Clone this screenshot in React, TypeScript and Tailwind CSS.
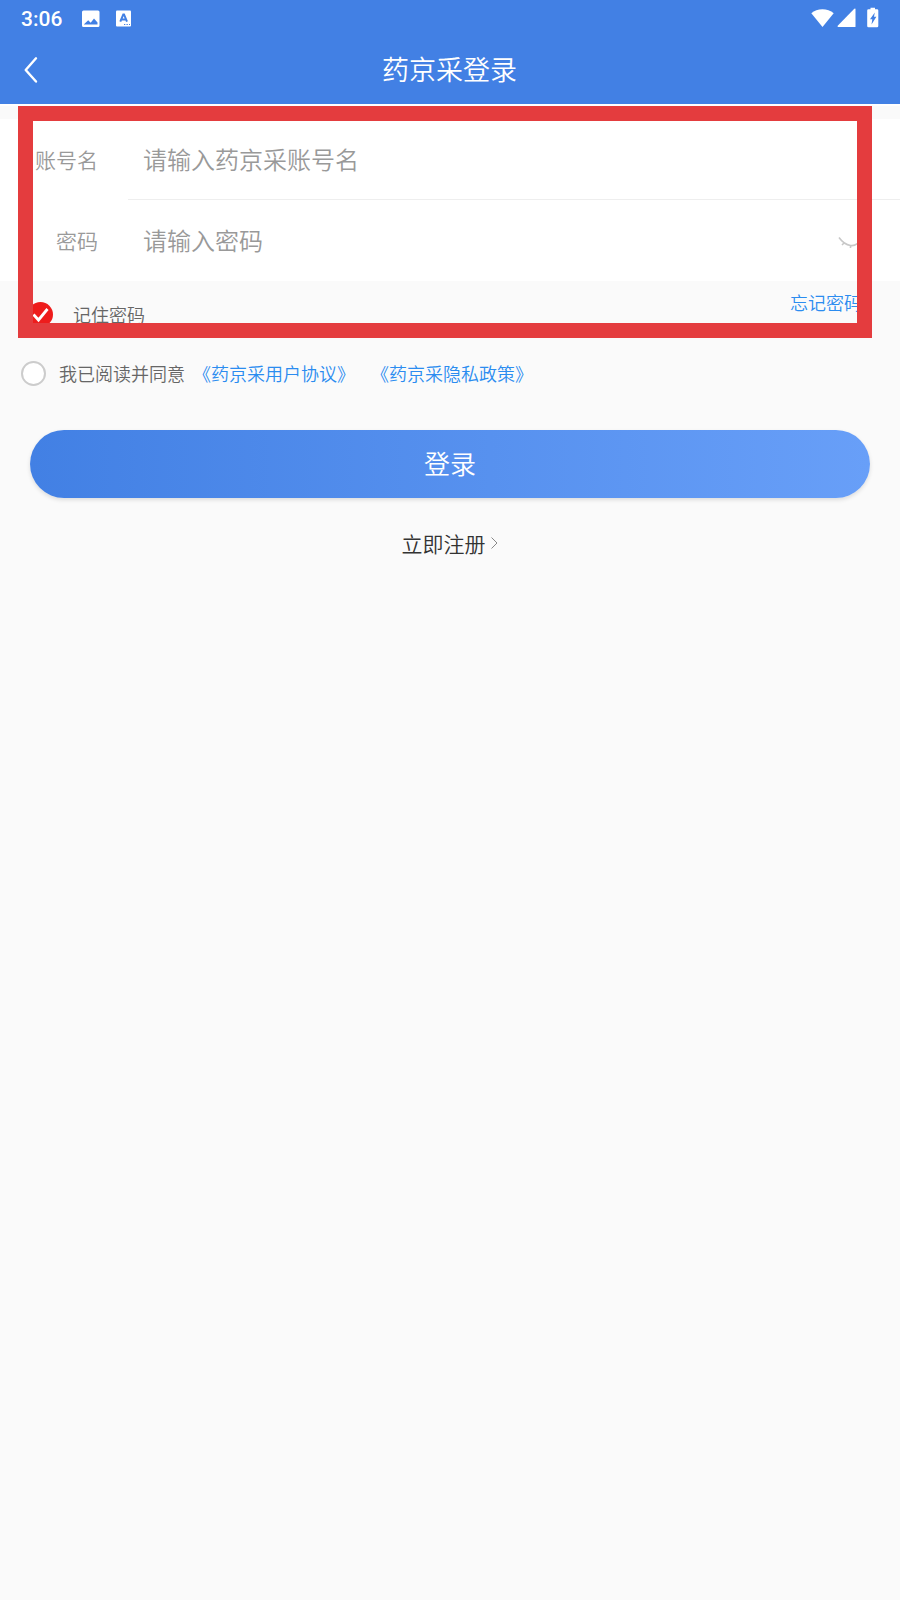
import * as React from "react";

const StatusBar = () => (
  <div className="flex h-9 items-center pl-[21px] pr-[21px] text-white">
    <span className="w-[61px] pt-px font-[Roboto] text-[21px] leading-9 font-medium">
      3:06
    </span>
    <svg className="mt-px h-[18px] w-[18px]" viewBox="0 0 18 18">
      <path
        fill="currentColor"
        fillRule="evenodd"
        d="M1.500 0.500h14.500q1.500 0 1.500 1.500v13.500q0 1.500-1.500 1.500H1.500q-1.500 0-1.500-1.500V2q0-1.500 1.500-1.500zM2 14.500h13.500v-2l-3.500-4-3.300 4.200-2.500-2.500-4.200 4z"
      />
    </svg>
    <svg className="mt-px ml-4 h-[17px] w-[16px]" viewBox="0 0 16 17">
      <path
        fill="currentColor"
        d="M1 0.500h13q1 0 1 1v14q0 1-1 1h-13q-1 0-1-1v-14q0-1 1-1z"
      />
      <path
        fill="none"
        stroke="#4280e4"
        strokeWidth="2"
        d="M4.300 11.700 7.300 4.400h.7L11 11.700M5.500 9.500h4.400"
      />
      <path
        stroke="#4280e4"
        strokeWidth="1.200"
        strokeDasharray="1.300 1.200"
        d="M8 14.500h6"
      />
    </svg>
    <div className="grow" />
    <svg className="h-[20px] w-[23px]" viewBox="0 0 23 20">
      <path fill="currentColor" d="M0.300 5.200C6-.2 16.800-.2 22.700 5.200L11.500 19z" />
    </svg>
    <svg className="ml-[3px] h-[20px] w-[19px]" viewBox="0 0 19 20">
      <path
        fill="currentColor"
        d="M18.500 1v17.500q0 .5-.5.500H1.200q-1.200-.3-.5-1.200L17.300.7q1.200-.7 1.200.3z"
      />
    </svg>
    <svg className="-mt-px ml-[11px] h-[21px] w-[12px]" viewBox="0 0 12 21">
      <path
        fill="currentColor"
        d="M3.500 0.700h4.500v1.600h2q1.300 0 1.300 1.300V19q0 1.300-1.300 1.300H1.500Q.2 20.300.2 19V3.600q0-1.300 1.300-1.300h2z"
      />
      <path fill="#4280e4" d="M7.800 5.500 7 9.700h2.400L4.500 17.500l.8-5.300H3z" />
    </svg>
  </div>
);

const Header = () => (
  <header className="h-[104px] bg-[#4280e4]">
    <StatusBar />
    <div className="flex h-[68px] items-center pl-6">
      <svg
        className="h-[28px] w-[14px]"
        viewBox="0 0 14 28"
        fill="none"
        stroke="white"
        strokeWidth="2.400"
        strokeLinecap="round"
        strokeLinejoin="round"
      >
        <path d="M12 2.300 1.700 14 12 25.500" />
      </svg>
      <h1 className="grow pr-[39px] pb-0.5 text-center text-[27px] leading-[66px] font-[350] text-white">
        药京采登录
      </h1>
    </div>
  </header>
);

const Field = ({
  label,
  placeholder,
  children,
}: {
  label: string;
  placeholder: string;
  children?: React.ReactNode;
}) => (
  <div className="flex h-[81px] items-center">
    <div className="w-[98px] text-right text-[21px] text-[#999]">{label}</div>
    <div className="ml-[45px] grow pb-0.5 text-2xl text-[#999]">
      {placeholder}
    </div>
    {children}
  </div>
);

export default function App() {
  return (
    <div
      className="relative min-h-[1600px] w-[900px] bg-[#fafafa] font-[350] text-[#666]"
      style={{ fontFamily: '"Noto Sans CJK SC", sans-serif' }}
    >
      <Header />
      <div className="h-[2px] bg-white" />

      <div className="mt-[13px] h-[162px] bg-white">
        <Field label="账号名" placeholder="请输入药京采账号名" />
        <div className="-mt-px ml-32 h-px bg-[#eee]" />
        <Field label="密码" placeholder="请输入密码">
          <svg
            className="mt-1 mr-[36px] h-3 w-[26px]"
            viewBox="0 0 26 12"
            fill="none"
            stroke="#c8c8c8"
            strokeWidth="1.600"
          >
            <path d="M1 .5Q6 7.500 12.500 8.500T25 .5M6 6 4 8M12.500 8v3M19.500 6 21 8" />
          </svg>
        </Field>
      </div>

      <div className="flex h-[67px] justify-between pr-[38px] pl-7 text-lg">
        <div className="flex h-[67px] items-center">
          <svg className="h-[25px] w-[25px]" viewBox="0 0 25 25">
            <circle cx="12.500" cy="12.500" r="12.500" fill="#ee1c1c" />
            <path
              d="M5.500 12.500 10.500 18 19.500 7"
              fill="none"
              stroke="white"
              strokeWidth="2.800"
            />
          </svg>
          <span className="ml-5 pb-0.5">记住密码</span>
        </div>
        <span className="h-[42px] leading-[42px] text-[#2b8cf0]">忘记密码</span>
      </div>

      <div className="flex h-[50px] items-center pl-[21px] text-lg">
        <div className="h-[25px] w-[25px] rounded-full border-2 border-[#ccc] bg-white" />
        <span className="ml-[13px]">我已阅读并同意</span>
        <span className="ml-2 text-[#2b8cf0]">《药京采用户协议》</span>
        <span className="ml-4 text-[#2b8cf0]">《药京采隐私政策》</span>
      </div>

      <button className="mx-[30px] mt-8 block h-[68px] w-[840px] rounded-full bg-linear-to-r from-[#4280e4] to-[#689ff8] pb-[3px] text-[26px] text-white shadow-[0_2px_4px_rgba(0,0,0,0.12)]">
        登录
      </button>

      <div className="mt-[30px] flex items-center justify-center pr-px text-[21px] text-[#333]">
        立即注册
        <svg
          className="-mt-0.5 ml-[5px] h-3 w-[7px]"
          viewBox="0 0 7 12"
          fill="none"
          stroke="#888"
        >
          <path d="M0.500 0.500 6 6 0.500 11.500" />
        </svg>
      </div>

      {/* highlight box over the form */}
      <div className="absolute top-[106px] left-[18px] h-[232px] w-[854px] border-[15px] border-[#e43c3e]" />
    </div>
  );
}
